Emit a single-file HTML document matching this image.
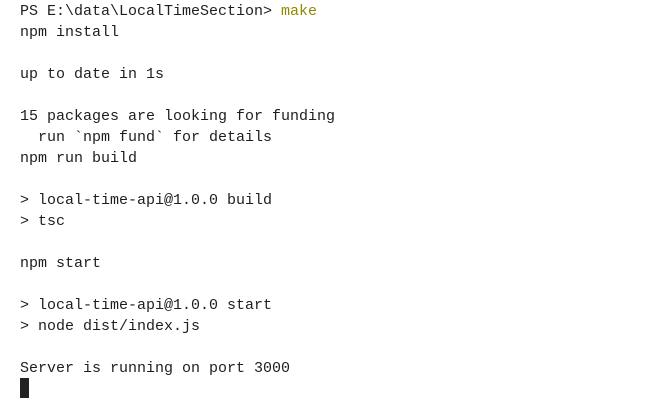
<!DOCTYPE html>
<html><head><meta charset="utf-8"><style>
html,body{margin:0;padding:0;background:#fff;width:654px;height:407px;overflow:hidden}
pre{margin:0;padding:1px 0 0 20px;font-family:"Liberation Mono","DejaVu Sans Mono",monospace;font-size:15px;line-height:21px;color:#1e1e1e}
.y{color:#8f8a00}
.c{display:inline-block;width:9px;height:20px;background:#222;vertical-align:top;margin-top:-1px}
</style></head><body><pre>PS E:\data\LocalTimeSection&gt; <span class="y">make</span>
npm install

up to date in 1s

15 packages are looking for funding
  run `npm fund` for details
npm run build

&gt; local-time-api@1.0.0 build
&gt; tsc

npm start

&gt; local-time-api@1.0.0 start
&gt; node dist/index.js

Server is running on port 3000
<span class="c"></span></pre></body></html>
